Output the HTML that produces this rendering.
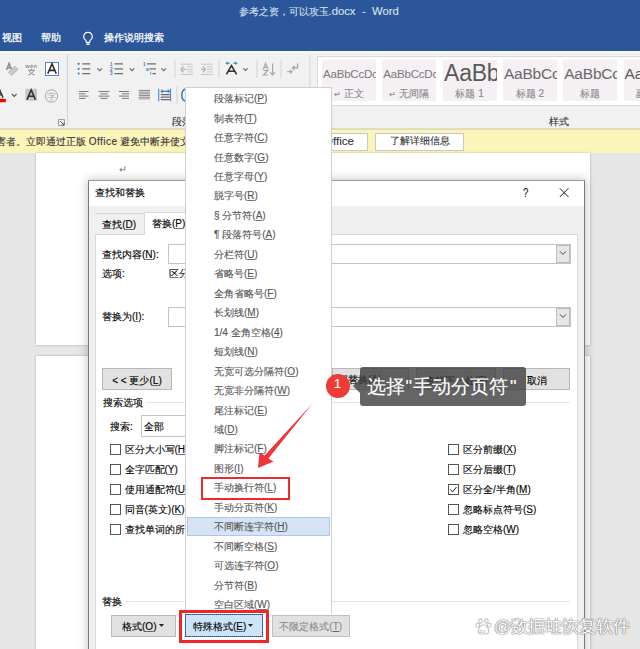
<!DOCTYPE html>
<html><head><meta charset="utf-8">
<style>
*{margin:0;padding:0;box-sizing:border-box}
html,body{width:640px;height:649px;overflow:hidden;background:#e6e6e6;font-family:"Liberation Sans",sans-serif;position:relative}
.a{position:absolute}
.t{position:absolute;white-space:nowrap;font-size:10px;-webkit-text-stroke:.12px currentColor;line-height:14px;height:14px;color:#000}
.u{text-decoration:underline;text-underline-offset:1px;text-decoration-color:rgba(0,0,0,.55)}
</style></head><body>
<!-- title bar -->
<div class="a" style="left:0;top:0;width:640px;height:51px;background:#2b579a"></div>
<div class="t" style="left:239px;top:3.5px;font-size:10px;line-height:16px;height:16px;color:#d9e1ec">参考之资，可以攻玉</div>
<div class="t" style="left:328.5px;top:3px;font-size:11.3px;line-height:16px;height:16px;color:#d9e1ec">.docx</div>
<div class="t" style="left:362px;top:3px;font-size:11.3px;line-height:16px;height:16px;color:#d9e1ec">-</div>
<div class="t" style="left:372px;top:3px;font-size:11.3px;line-height:16px;height:16px;color:#d9e1ec">Word</div>
<div class="t" style="left:2px;top:31px;color:#fff;-webkit-text-stroke:.25px #fff">视图</div>
<div class="t" style="left:41px;top:31px;color:#fff;-webkit-text-stroke:.25px #fff">帮助</div>
<div class="t" style="left:104px;top:31px;color:#fff;-webkit-text-stroke:.25px #fff">操作说明搜索</div>
<svg class="a" style="left:81px;top:31px" width="14" height="15" viewBox="0 0 14 15"><path d="M7 1.2a4.3 4.3 0 0 0-2.6 7.7c.6.5.9 1.2.9 1.9v.6h3.4v-.6c0-.7.3-1.4.9-1.9A4.3 4.3 0 0 0 7 1.2z" fill="none" stroke="#fff" stroke-width="1.1"/><path d="M5.3 12h3.4M5.6 13.4h2.8" stroke="#fff" stroke-width="1.2"/></svg>

<!-- ribbon -->
<div class="a" style="left:0;top:51px;width:640px;height:78px;background:#f1f1f1;border-top:2px solid #f8f8f8"></div>
<div class="a" style="left:0;top:128px;width:640px;height:1px;background:#dadada"></div>

<!-- ribbon font group icons -->
<svg class="a" style="left:0;top:54px" width="67" height="74" viewBox="0 54 67 74">
 <path d="M6.5 70l2.6-6.6 2.6 6.6M7.5 67.8h3.3" fill="none" stroke="#8c8c8c" stroke-width="1.5"/>
 <path d="M8.2 72.2l6.6-6.2 3.4 3.4-6.6 6.2z" fill="#c6c6c6" stroke="#b0b0b0" stroke-width=".6"/>
 <path d="M9.8 73.6l2.2-2" stroke="#f1f1f1" stroke-width=".8"/>
 <text x="25.3" y="67.6" font-size="5.6" fill="#8c8c8c" font-family="Liberation Sans" font-weight="bold" textLength="11.6">wén</text>
 <path d="M28 70.2h7M31.5 68.8v1.4M29.3 70.4c.8 2.4 3 4 5.3 4.5M33.7 70.4c-.8 2.4-3 4-5.5 4.5" fill="none" stroke="#8c8c8c" stroke-width="1"/>
 <rect x="45.5" y="62.5" width="13" height="13" fill="#fff" stroke="#4f86cc" stroke-width="1"/>
 <path d="M47.8 73.6l4.2-9.8 4.2 9.8M49.4 70.4h5.2" fill="none" stroke="#2f2f2f" stroke-width="1.6"/>
 <path d="M-4.6 97.6l3.8-8.6 3.8 8.6M-3 94.6h4.4" fill="none" stroke="#3a3a3a" stroke-width="1.6"/>
 <rect x="0" y="98.8" width="5.8" height="3.4" fill="#f00"/>
 <path d="M11.8 94l2.4 2.4 2.4-2.4" fill="none" stroke="#555" stroke-width="1.1"/>
 <rect x="25.4" y="88.8" width="11.6" height="11.9" fill="#c4c4c4"/>
 <path d="M27 99.6l4.2-9.6 4.2 9.6M28.6 96.2h5.2" fill="none" stroke="#303030" stroke-width="1.6"/>
 <circle cx="51.5" cy="96" r="6.2" fill="none" stroke="#a9a9a9" stroke-width="1"/>
 <text x="47.2" y="99.6" font-size="8.6" fill="#a9a9a9">字</text>
 <path d="M58.5 119.5h6v6h-6z" fill="none" stroke="#8a8a8a" stroke-width=".8"/>
 <path d="M60 121l4 4M64 122.5v2.5h-2.5" fill="none" stroke="#555" stroke-width=".9"/>
</svg>
<div class="a" style="left:67px;top:54px;width:1px;height:71px;background:#d2d2d2"></div>
<!-- paragraph group icons row1 -->
<svg class="a" style="left:68px;top:54px" width="250" height="74" viewBox="68 54 250 74">
 <g fill="#3f78c3"><circle cx="78.6" cy="63.8" r="1.1"/><circle cx="78.6" cy="68.8" r="1.1"/><circle cx="78.6" cy="73.6" r="1.1"/></g>
 <path d="M82.2 63.8h8M82.2 68.8h8M82.2 73.6h8" stroke="#6e6e6e" stroke-width="1.2"/>
 <path d="M97.4 68.3l2.3 2.3 2.3-2.3" fill="none" stroke="#666" stroke-width="1.1"/>
 <g fill="#3f78c3" font-size="4.6" font-family="Liberation Sans" font-weight="bold"><text x="110" y="65.5">1</text><text x="110" y="70.5">2</text><text x="110" y="75.3">3</text></g>
 <path d="M114.5 63.8h8.5M114.5 68.8h8.5M114.5 73.6h8.5" stroke="#6e6e6e" stroke-width="1.2"/>
 <path d="M129.7 68.3l2.3 2.3 2.3-2.3" fill="none" stroke="#666" stroke-width="1.1"/>
 <g fill="#3f78c3" font-size="4.6" font-family="Liberation Sans" font-weight="bold"><text x="143" y="65.5">1</text><text x="146" y="70.5">a</text><text x="150" y="75.3">i</text></g>
 <path d="M147 63.8h9M149.5 68.8h6.5M152.5 73.6h3.5" stroke="#6e6e6e" stroke-width="1.2"/>
 <path d="M161.4 68.3l2.3 2.3 2.3-2.3" fill="none" stroke="#666" stroke-width="1.1"/>
 <rect x="174.5" y="60" width="1" height="18" fill="#d4d4d4"/>
 <path d="M180.8 64.2h12M187 66.9h5.8M187 69.4h5.8M187 71.9h5.8M180.8 74.6h12" stroke="#c6c6c6" stroke-width="1"/>
 <path d="M182.2 69.4h4" stroke="#b8b8b8" stroke-width="1.6"/>
 <path d="M180.6 69.4l2.8-2.8M180.6 69.4l2.8 2.8" stroke="#b8b8b8" stroke-width="1.4"/>
 <path d="M200.8 64.2h12M207 66.9h5.8M207 69.4h5.8M207 71.9h5.8M200.8 74.6h12" stroke="#c6c6c6" stroke-width="1"/>
 <path d="M201 69.4h4" stroke="#b8b8b8" stroke-width="1.6"/>
 <path d="M205.6 69.4l-2.8-2.8M205.6 69.4l-2.8 2.8" stroke="#b8b8b8" stroke-width="1.4"/>
 <rect x="218.5" y="60" width="1" height="18" fill="#d4d4d4"/>
 <path d="M226.4 74.4l5.1-8.8 5.1 8.8M228.6 71.2h5.8" fill="none" stroke="#333" stroke-width="1.6"/>
 <path d="M227 63.2h2.6M233.4 63.2h2.6" stroke="#3d7cc9" stroke-width="1.2"/>
 <path d="M225.4 63.2l2.2-1.8v3.6zM237.6 63.2l-2.2-1.8v3.6z" fill="#3d7cc9"/>
 <path d="M243.3 68.3l2.2 2.2 2.2-2.2" fill="none" stroke="#666" stroke-width="1.1"/>
 <rect x="256.5" y="60" width="1" height="18" fill="#d4d4d4"/>
 <path d="M263.2 69.4l2.4-6 2.4 6M264.1 67.4h3" fill="none" stroke="#a8a8a8" stroke-width="1.2"/>
 <path d="M263.4 70.4h4.4l-4.4 4.6h4.6" fill="none" stroke="#a8a8a8" stroke-width="1.2"/>
 <path d="M272.6 63.5v11M270.2 72.4l2.4 2.6 2.4-2.6" fill="none" stroke="#a8a8a8" stroke-width="1.2"/>
 <rect x="280.5" y="60" width="1" height="18" fill="#d4d4d4"/>
 <path d="M297.6 63.6v4.2h-4.6" fill="none" stroke="#a8a8a8" stroke-width="1.4"/>
 <path d="M294.6 65.6l-2.2 2.2 2.2 2.2" fill="none" stroke="#a8a8a8" stroke-width="1.2"/>
 <path d="M287.2 71.6h4.6M290 69.6l2 2-2 2" fill="none" stroke="#a8a8a8" stroke-width="1.2"/>
 <rect x="309.5" y="55" width="1" height="71" fill="#d4d4d4"/>
 <g stroke="#7a7a7a" stroke-width="1">
  <path d="M79 91.5h9.5M79 93.8h6.5M79 96.1h9.5M79 98.4h6.5"/>
  <path d="M98.5 91.5h11M100.5 93.8h7M98.5 96.1h11M100.5 98.4h7"/>
  <path d="M119 91.5h10M122 93.8h7M119 96.1h10M122 98.4h7"/>
 </g>
 <rect x="138.8" y="89.6" width="11.2" height="10.4" fill="#d2d2d2"/>
 <path d="M138.8 90.6h11.2M138.8 93h11.2M138.8 95.4h11.2M138.8 97.8h11.2" stroke="#8a8a8a" stroke-width="1"/>
 <path d="M160.8 94.6h9M160.8 97.1h9M160.8 99.6h9" stroke="#6a6a6a" stroke-width="1.4"/>
 <path d="M158.75 88.8v12.5M170.6 88.8v12.5" stroke="#3d7cc9" stroke-width="1"/>
 <path d="M161.5 91.3h8" stroke="#3d7cc9" stroke-width="1.3"/>
 <path d="M160.2 91.3l2.4-2.1v4.2zM170.2 91.3l-2.4-2.1v4.2z" fill="#3d7cc9"/>
 <rect x="176.5" y="86.5" width="1" height="18" fill="#d4d4d4"/>
 <path d="M185.5 89a4.5 6.2 0 0 0 0 12.2" fill="none" stroke="#3d7cc9" stroke-width="1.5"/>
</svg>
<div class="t" style="left:172px;top:114.5px;color:#333">段落</div>
<div class="t" style="left:549px;top:114.5px;color:#333">样式</div>
<!-- style gallery -->
<div class="a" style="left:317px;top:56px;width:330px;height:50px;background:#fff;border:1px solid #d9d9d9"></div>
<div class="a" style="left:322.0px;top:60px;width:54px;height:40.5px;background:#f4f0f4;overflow:hidden"><div class="t" style="left:1px;top:2px;height:24px;line-height:24px;font-size:11.5px;color:#7a7a7a;letter-spacing:-.2px;-webkit-text-stroke:0">AaBbCcDc</div><div class="t" style="left:0;top:27px;width:54px;text-align:center;color:#888"><span style="font-size:8px">↵</span> 正文</div></div>
<div class="a" style="left:382.3px;top:60px;width:54px;height:40.5px;background:#f4f0f4;overflow:hidden"><div class="t" style="left:1px;top:2px;height:24px;line-height:24px;font-size:11.5px;color:#7a7a7a;letter-spacing:-.2px;-webkit-text-stroke:0">AaBbCcDc</div><div class="t" style="left:0;top:27px;width:54px;text-align:center;color:#888"><span style="font-size:8px">↵</span> 无间隔</div></div>
<div class="a" style="left:442.6px;top:60px;width:54px;height:40.5px;background:#f4f0f4;overflow:hidden"><div class="t" style="left:1.5px;top:1px;height:24px;line-height:24px;font-size:23px;color:#5a5a5a;letter-spacing:-.3px;-webkit-text-stroke:0">AaBbCc</div><div class="t" style="left:0;top:27px;width:54px;text-align:center;color:#888">标题 1</div></div>
<div class="a" style="left:502.9px;top:60px;width:54px;height:40.5px;background:#f4f0f4;overflow:hidden"><div class="t" style="left:1px;top:2px;height:24px;line-height:24px;font-size:15.5px;color:#6a6a6a;letter-spacing:-.2px;-webkit-text-stroke:0">AaBbCcDd</div><div class="t" style="left:0;top:27px;width:54px;text-align:center;color:#888">标题 2</div></div>
<div class="a" style="left:563.2px;top:60px;width:54px;height:40.5px;background:#f4f0f4;overflow:hidden"><div class="t" style="left:1px;top:2px;height:24px;line-height:24px;font-size:15.5px;color:#6a6a6a;letter-spacing:-.2px;-webkit-text-stroke:0">AaBbCcDd</div><div class="t" style="left:0;top:27px;width:54px;text-align:center;color:#888">标题</div></div>
<div class="a" style="left:623.5px;top:60px;width:54px;height:40.5px;background:#f4f0f4;overflow:hidden"><div class="t" style="left:1px;top:2px;height:24px;line-height:24px;font-size:15.5px;color:#5a5a5a;letter-spacing:-.2px;-webkit-text-stroke:0">AaBbCcDd</div><div class="t" style="left:0;top:27px;width:54px;text-align:center;color:#888">副标题</div></div>

<!-- yellow bar -->
<div class="a" style="left:0;top:129px;width:640px;height:24px;background:#fbf5b9;border-top:1px solid #e6dfa0"></div>
<div class="t" style="left:-4px;top:134.5px;color:#333">害者。立即通过正版 <span style="letter-spacing:.45px">Office</span> 避免中断并使文档保持最新。</div>
<div class="a" style="left:300px;top:132.5px;width:68px;height:18px;background:#fff;border:1px solid #c9c9c9"></div>
<div class="t" style="left:324px;top:133px;color:#333;font-size:11.5px;line-height:16px;height:16px">Office</div>
<div class="a" style="left:375px;top:132.5px;width:89px;height:18px;background:#fff;border:1px solid #c9c9c9"></div>
<div class="t" style="left:375px;top:134px;width:89px;text-align:center;color:#333">了解详细信息</div>

<!-- pages -->
<div class="a" style="left:36px;top:153px;width:554px;height:192px;background:#fff;box-shadow:0 0 2px rgba(0,0,0,.3)"></div>
<div class="a" style="left:36px;top:356px;width:554px;height:300px;background:#fff;box-shadow:0 0 2px rgba(0,0,0,.3)"></div>
<svg class="a" style="left:118px;top:165px" width="9" height="8" viewBox="118 165 9 8"><path d="M124.8 166.2v3.6h-4.6" fill="none" stroke="#8a8a8a" stroke-width="1.1"/><path d="M119.2 169.8l2.4-2.2v4.4z" fill="#8a8a8a"/></svg>

<!-- dialog -->
<div class="a" style="left:88px;top:180px;width:497px;height:475px;box-shadow:0 0 9px 1px rgba(0,0,0,.22)"></div>
<div class="a" style="left:88px;top:180px;width:497px;height:475px;background:#fff;border:1px solid #7a7a7a;border-top-color:#9a9a9a"></div>
<div class="t" style="left:95px;top:186px">查找和替换</div>
<div class="t" style="left:523.3px;top:185px;font-size:12px;line-height:16px;height:16px;color:#222;transform:scaleX(.8);transform-origin:0 0">?</div>
<svg class="a" style="left:558px;top:187px" width="12" height="11" viewBox="0 0 12 11"><path d="M1.8 1.3l8.7 8.7M10.5 1.3l-8.7 8.7" stroke="#222" stroke-width="1"/></svg>
<div class="a" style="left:89px;top:206px;width:495px;height:449px;background:#f0f0f0"></div>
<div class="a" style="left:95px;top:213px;width:49px;height:22px;background:#f0f0f0;border-top:1px solid #d9d9d9"></div>
<div class="t" style="left:102.2px;top:218.3px">查找(<span class="u">D</span>)</div>
<div class="a" style="left:95px;top:234px;width:483px;height:430px;background:#fff;border:1px solid #d9d9d9"></div>
<div class="a" style="left:144px;top:212px;width:52px;height:23px;background:#fff;border:1px solid #d9d9d9;border-bottom:none"></div>
<div class="t" style="left:152px;top:217px">替换(<span class="u">P</span>)</div>

<div class="t" style="left:102px;top:248px">查找内容(<span class="u">N</span>):</div>
<div class="a" style="left:168px;top:244px;width:403px;height:20px;background:#fff;border:1px solid #c4c4c4"></div>
<div class="a" style="left:556px;top:245px;width:14px;height:18px;background:#e6e6e6;border:1px solid #bcbcbc"></div>
<svg class="a" style="left:559px;top:250px" width="9" height="6"><path d="M1 1.4l3 3 3-3" fill="none" stroke="#444"/></svg>
<div class="t" style="left:102px;top:267px">选项:</div>
<div class="t" style="left:168.5px;top:267px">区分全/半角</div>

<div class="t" style="left:102px;top:310px">替换为(<span class="u">I</span>):</div>
<div class="a" style="left:168px;top:306.5px;width:403px;height:20px;background:#fff;border:1px solid #c4c4c4"></div>
<div class="a" style="left:556px;top:307.5px;width:14px;height:18px;background:#e6e6e6;border:1px solid #bcbcbc"></div>
<svg class="a" style="left:559px;top:312.5px" width="9" height="6"><path d="M1 1.4l3 3 3-3" fill="none" stroke="#444"/></svg>

<div class="a" style="left:102px;top:368px;width:70px;height:22px;background:#e1e1e1;border:1px solid #b8b8b8"></div>
<div class="t" style="left:102px;top:373.5px;width:70px;text-align:center">&lt; &lt; 更少(<span class="u">L</span>)</div>
<div class="a" style="left:250px;top:368px;width:75px;height:22px;background:#e1e1e1;border:1px solid #b8b8b8"></div>
<div class="t" style="left:250px;top:373.5px;width:75px;text-align:center">替换(<span class="u">R</span>)</div>
<div class="a" style="left:332px;top:368px;width:77px;height:22px;background:#e1e1e1;border:1px solid #b8b8b8"></div>
<div class="t" style="left:328px;top:372.5px">全部替换(<span class="u">A</span>)</div>
<div class="a" style="left:416px;top:368px;width:80px;height:22px;background:#e1e1e1;border:1px solid #b8b8b8"></div>
<div class="t" style="left:416px;top:373.5px;width:80px;text-align:center">查找下一处(<span class="u">F</span>)</div>
<div class="a" style="left:503px;top:368px;width:67px;height:22px;background:#e1e1e1;border:1px solid #b8b8b8"></div>
<div class="t" style="left:503px;top:373.5px;width:67px;text-align:center">取消</div>

<div class="t" style="left:102.5px;top:396px">搜索选项</div>
<div class="a" style="left:146px;top:401.5px;width:424px;height:1px;background:#e3e3e3"></div>
<div class="t" style="left:110px;top:420px">搜索:</div>
<div class="a" style="left:140.5px;top:415px;width:80px;height:22px;background:#fff;border:1px solid #c4c4c4"></div>
<div class="t" style="left:144px;top:420px">全部</div>
<div class="a" style="left:110px;top:443.5px;width:11px;height:11px;border:1px solid #555;background:#fff"></div><div class="t" style="left:124.5px;top:443.0px">区分大小写(<span class="u">H</span>)</div>
<div class="a" style="left:448px;top:443.5px;width:11px;height:11px;border:1px solid #555;background:#fff"></div><div class="t" style="left:463px;top:443.0px">区分前缀(<span class="u">X</span>)</div>
<div class="a" style="left:110px;top:463.5px;width:11px;height:11px;border:1px solid #555;background:#fff"></div><div class="t" style="left:124.5px;top:463.0px">全字匹配(<span class="u">Y</span>)</div>
<div class="a" style="left:448px;top:463.5px;width:11px;height:11px;border:1px solid #555;background:#fff"></div><div class="t" style="left:463px;top:463.0px">区分后缀(<span class="u">T</span>)</div>
<div class="a" style="left:110px;top:483.5px;width:11px;height:11px;border:1px solid #555;background:#fff"></div><div class="t" style="left:124.5px;top:483.0px">使用通配符(<span class="u">U</span>)</div>
<div class="a" style="left:448px;top:483.5px;width:11px;height:11px;border:1px solid #555;background:#fff"></div><div class="t" style="left:463px;top:483.0px">区分全/半角(<span class="u">M</span>)</div>
<div class="a" style="left:110px;top:503.5px;width:11px;height:11px;border:1px solid #555;background:#fff"></div><div class="t" style="left:124.5px;top:503.0px">同音(英文)(<span class="u">K</span>)</div>
<div class="a" style="left:448px;top:503.5px;width:11px;height:11px;border:1px solid #555;background:#fff"></div><div class="t" style="left:463px;top:503.0px">忽略标点符号(<span class="u">S</span>)</div>
<div class="a" style="left:110px;top:523.5px;width:11px;height:11px;border:1px solid #555;background:#fff"></div><div class="t" style="left:124.5px;top:523.0px">查找单词的所有形式(英文)(<span class="u">W</span>)</div>
<div class="a" style="left:448px;top:523.5px;width:11px;height:11px;border:1px solid #555;background:#fff"></div><div class="t" style="left:463px;top:523.0px">忽略空格(<span class="u">W</span>)</div>
<svg class="a" style="left:449px;top:484.5px" width="9" height="9"><path d="M1.5 4.5l2 2.5 4-5" fill="none" stroke="#222" stroke-width="1"/></svg>
<div class="t" style="left:102px;top:595px">替换</div>
<div class="a" style="left:126px;top:600.5px;width:444px;height:1px;background:#e3e3e3"></div>
<div class="a" style="left:111px;top:615px;width:65px;height:22px;background:#e1e1e1;border:1px solid #b8b8b8"></div>
<div class="t" style="left:122px;top:620px">格式(<span class="u">O</span>)</div>
<svg class="a" style="left:159px;top:624px" width="6" height="4"><path d="M0 0h5l-2.5 3z" fill="#222"/></svg>
<div class="a" style="left:185px;top:614px;width:78px;height:23px;background:#cce4f7;border:1px solid #4f86cc"></div>
<div class="a" style="left:185px;top:614px;width:78px;height:23px;border:1px dotted rgba(0,0,40,.42)"></div>
<div class="t" style="left:193px;top:620px">特殊格式(<span class="u">E</span>)</div>
<svg class="a" style="left:248px;top:624px" width="6" height="4"><path d="M0 0h5l-2.5 3z" fill="#222"/></svg>
<div class="a" style="left:271.5px;top:614.5px;width:78.5px;height:22px;background:#e1e1e1;border:1px solid #bfbfbf"></div>
<div class="t" style="left:271.5px;top:620px;width:78.5px;text-align:center;color:#8a8a8a">不限定格式(<span class="u">T</span>)</div>

<!-- dropdown menu -->
<div class="a" style="left:185px;top:87px;width:147px;height:527px;background:#fff;border:1px solid #d0d0d0;border-bottom:none"></div>
<div class="a" style="left:187px;top:516.5px;width:143px;height:19px;background:#d5e3f4;border:1px solid #a9c9ee"></div>
<div class="t" style="left:214px;top:92.1px;color:#555">段落标记(<span class="u">P</span>)</div>
<div class="t" style="left:214px;top:111.6px;color:#555">制表符(<span class="u">T</span>)</div>
<div class="t" style="left:214px;top:131.0px;color:#555">任意字符(<span class="u">C</span>)</div>
<div class="t" style="left:214px;top:150.5px;color:#555">任意数字(<span class="u">G</span>)</div>
<div class="t" style="left:214px;top:169.9px;color:#555">任意字母(<span class="u">Y</span>)</div>
<div class="t" style="left:214px;top:189.4px;color:#555">脱字号(<span class="u">R</span>)</div>
<div class="t" style="left:214px;top:208.9px;color:#555">§ 分节符(<span class="u">A</span>)</div>
<div class="t" style="left:214px;top:228.3px;color:#555">¶ 段落符号(<span class="u">A</span>)</div>
<div class="t" style="left:214px;top:247.8px;color:#555">分栏符(<span class="u">U</span>)</div>
<div class="t" style="left:214px;top:267.2px;color:#555">省略号(<span class="u">E</span>)</div>
<div class="t" style="left:214px;top:286.7px;color:#555">全角省略号(<span class="u">F</span>)</div>
<div class="t" style="left:214px;top:306.2px;color:#555">长划线(<span class="u">M</span>)</div>
<div class="t" style="left:214px;top:325.6px;color:#555">1/4 全角空格(<span class="u">4</span>)</div>
<div class="t" style="left:214px;top:345.1px;color:#555">短划线(<span class="u">N</span>)</div>
<div class="t" style="left:214px;top:364.5px;color:#555">无宽可选分隔符(<span class="u">O</span>)</div>
<div class="t" style="left:214px;top:384.0px;color:#555">无宽非分隔符(<span class="u">W</span>)</div>
<div class="t" style="left:214px;top:403.5px;color:#555">尾注标记(<span class="u">E</span>)</div>
<div class="t" style="left:214px;top:422.9px;color:#555">域(<span class="u">D</span>)</div>
<div class="t" style="left:214px;top:442.4px;color:#555">脚注标记(<span class="u">F</span>)</div>
<div class="t" style="left:214px;top:461.8px;color:#555">图形(<span class="u">I</span>)</div>
<div class="t" style="left:214px;top:481.3px;color:#555">手动换行符(<span class="u">L</span>)</div>
<div class="t" style="left:214px;top:500.8px;color:#555">手动分页符(<span class="u">K</span>)</div>
<div class="t" style="left:214px;top:520.2px;color:#555">不间断连字符(<span class="u">H</span>)</div>
<div class="t" style="left:214px;top:539.7px;color:#555">不间断空格(<span class="u">S</span>)</div>
<div class="t" style="left:214px;top:559.1px;color:#555">可选连字符(<span class="u">O</span>)</div>
<div class="t" style="left:214px;top:578.6px;color:#555">分节符(<span class="u">B</span>)</div>
<div class="t" style="left:214px;top:598.1px;color:#555">空白区域(<span class="u">W</span>)</div>
<div class="a" style="left:200.5px;top:476.5px;width:89px;height:23px;border:2.8px solid #ee2a2a"></div>
<div class="a" style="left:179px;top:610px;width:90px;height:32.5px;border:3px solid #f0262a"></div>

<!-- arrow -->
<svg class="a" style="left:0;top:0" width="640" height="649"><path d="M312.5 403.5L268.4 458.6L273.5 461.5L258 468L259.5 452.5L264.6 455.4Z" fill="#ef3535"/></svg>
<!-- callout -->
<div class="a" style="left:359.5px;top:366.5px;width:166px;height:39px;background:rgba(62,62,62,.8);border-radius:3px"></div>
<svg class="a" style="left:352px;top:379px" width="8" height="14"><path d="M8 0L1 7L8 14z" fill="rgba(62,62,62,.8)"/></svg>
<div class="a" style="left:325.5px;top:373.5px;width:24px;height:24px;border-radius:50%;background:#ee3b36"></div>
<div class="t" style="left:325.5px;top:375.5px;width:24px;text-align:center;color:#fff;font-size:13.5px;line-height:16px;height:16px">1</div>
<div class="t" style="left:366.5px;top:376px;color:#fff;font-size:18.5px;line-height:22px;height:22px;-webkit-text-stroke:.1px #fff">选择<span style="padding:0 1px">"</span>手动分页符<span style="padding-left:2px">"</span></div>
<!-- watermark -->
<svg class="a" style="left:474px;top:617px" width="20" height="20" viewBox="474 617 20 20"><g fill="#fff" stroke="#c4c4c4" stroke-width="1.1"><ellipse cx="480.6" cy="621" rx="1.7" ry="2.1"/><ellipse cx="486.4" cy="621" rx="1.7" ry="2.1"/><circle cx="477.8" cy="625.3" r="1.9"/><circle cx="489.3" cy="625.3" r="1.9"/><path d="M483.5 624.5c-2.6 0-5.2 3.6-5.2 6.6 0 2 1.2 2.9 2.8 2.9h4.8c1.6 0 2.8-.9 2.8-2.9 0-3-2.6-6.6-5.2-6.6z"/></g><text x="479.6" y="632.6" font-size="5.2" fill="#b8b8b8" font-family="Liberation Sans">du</text></svg>
<div class="t" style="left:494px;top:616px;color:#fff;font-size:17px;line-height:22px;height:22px;text-shadow:0 0 1px #777,0 0 1px #777,0 0 1px #777,0 0 2px #bbb">@数据蛙恢复软件</div>
</body></html>
